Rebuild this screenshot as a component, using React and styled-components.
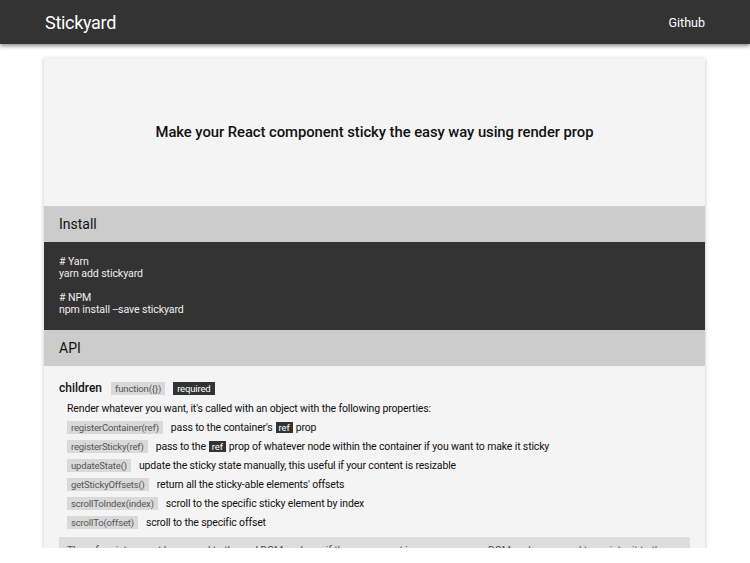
import React from 'react'
import styled, {createGlobalStyle} from "styled-components"

const GlobalStyle = createGlobalStyle`
    body {
        margin: 0;
        background: #fff;
        font-family: Roboto, "Noto Sans", sans-serif;
        color: #111;
    }
`

const Header = styled.header`
    height: 44px;
    background-color: #333;
    box-shadow: 0 2px 4px rgba(0,0,0,0.45);
    display: flex;
    align-items: center;
    justify-content: space-between;
    padding: 0 45px;
    position: relative;
    z-index: 1;
`
const Brand = styled.div`
    color: #fff;
    font-size: 18px;
    letter-spacing: -0.3px;
`
const NavLink = styled.a`
    color: #fff;
    font-size: 12.5px;
    text-decoration: none;
`

const Main = styled.main`
    padding: 14px 45px 0 44px;
`
const Card = styled.div`
    height: 490px;
    overflow: hidden;
    background-color: #f4f4f4;
    box-shadow: 0 1px 4px rgba(0,0,0,0.25);
`
const Hero = styled.div`
    height: 148px;
    display: flex;
    align-items: center;
    justify-content: center;
`
const Tagline = styled.h1`
    margin: 0;
    font-size: 14.8px;
    font-weight: 500;
    letter-spacing: -0.05px;
`
const SectionTitle = styled.h2`
    margin: 0;
    height: 36px;
    display: flex;
    align-items: center;
    padding: 0 15px;
    background-color: #ccc;
    font-size: 14px;
    font-weight: 400;
`
const Code = styled.pre`
    margin: 0;
    background-color: #333;
    color: #eee;
    padding: 14px 15px;
    font-family: Roboto, "Noto Sans", sans-serif;
    font-size: 10.6px;
    line-height: 12px;
    letter-spacing: -0.1px;
    height: 60px;
`
const ApiBody = styled.div`
    padding: 13px 15px 0;
`
const PropRow = styled.div`
    display: flex;
    align-items: center;
    gap: 8px;
    height: 18px;
`
const PropName = styled.span`
    font-size: 12px;
    font-weight: 500;
    margin-right: 1px;
`
const Tag = styled.span`
    font-size: 9.5px;
    line-height: 13px;
    padding: 0 4px;
    background-color: ${props => props.dark ? "#333" : "#d9d9d9"};
    color: ${props => props.dark ? "#fff" : "#555"};
    letter-spacing: -0.15px;
`
const Desc = styled.p`
    margin: 3px 0 0 8px;
    font-size: 10.5px;
    line-height: 18px;
    letter-spacing: -0.15px;
`
const MethodList = styled.div`
    margin-left: 8px;
    display: flex;
    flex-direction: column;
    gap: 1px;
`
const Method = styled.div`
    display: flex;
    align-items: center;
    gap: 8px;
    height: 18px;
    font-size: 10.5px;
    letter-spacing: -0.15px;
`
const InlineRef = styled.span`
    background-color: #333;
    color: #fff;
    padding: 0 3px;
    margin: 0 3px;
    font-size: 9.5px;
    line-height: 13px;
`
const Note = styled.div`
    margin-top: 6px;
    background-color: #ddd;
    color: #555;
    padding: 7px 8px;
    font-size: 10.5px;
    letter-spacing: -0.15px;
`

const methods = [
    {name: "registerContainer(ref)", desc: <>pass to the container's<InlineRef>ref</InlineRef>prop</>},
    {name: "registerSticky(ref)", desc: <>pass to the<InlineRef>ref</InlineRef>prop of whatever node within the container if you want to make it sticky</>},
    {name: "updateState()", desc: "update the sticky state manually, this useful if your content is resizable"},
    {name: "getStickyOffsets()", desc: "return all the sticky-able elements' offsets"},
    {name: "scrollToIndex(index)", desc: "scroll to the specific sticky element by index"},
    {name: "scrollTo(offset)", desc: "scroll to the specific offset"},
]

const App = () => {
    return (
        <>
            <GlobalStyle/>
            <Header>
                <Brand>Stickyard</Brand>
                <NavLink href="#">Github</NavLink>
            </Header>
            <Main>
                <Card>
                    <Hero>
                        <Tagline>Make your React component sticky the easy way using render prop</Tagline>
                    </Hero>
                    <SectionTitle>Install</SectionTitle>
                    <Code>{`# Yarn
yarn add stickyard

# NPM
npm install --save stickyard`}</Code>
                    <SectionTitle>API</SectionTitle>
                    <ApiBody>
                        <PropRow>
                            <PropName>children</PropName>
                            <Tag>function({"{}"})</Tag>
                            <Tag dark>required</Tag>
                        </PropRow>
                        <Desc>Render whatever you want, it's called with an object with the following properties:</Desc>
                        <MethodList>
                            {methods.map((m) => (
                                <Method key={m.name}>
                                    <Tag>{m.name}</Tag>
                                    <span>{m.desc}</span>
                                </Method>
                            ))}
                        </MethodList>
                        <Note>The ref register must be passed to the real DOM node, as if the component is a wrapper upon DOM node, you need to register it to the real DOM node.</Note>
                    </ApiBody>
                </Card>
            </Main>
        </>
    )
}

export default App
